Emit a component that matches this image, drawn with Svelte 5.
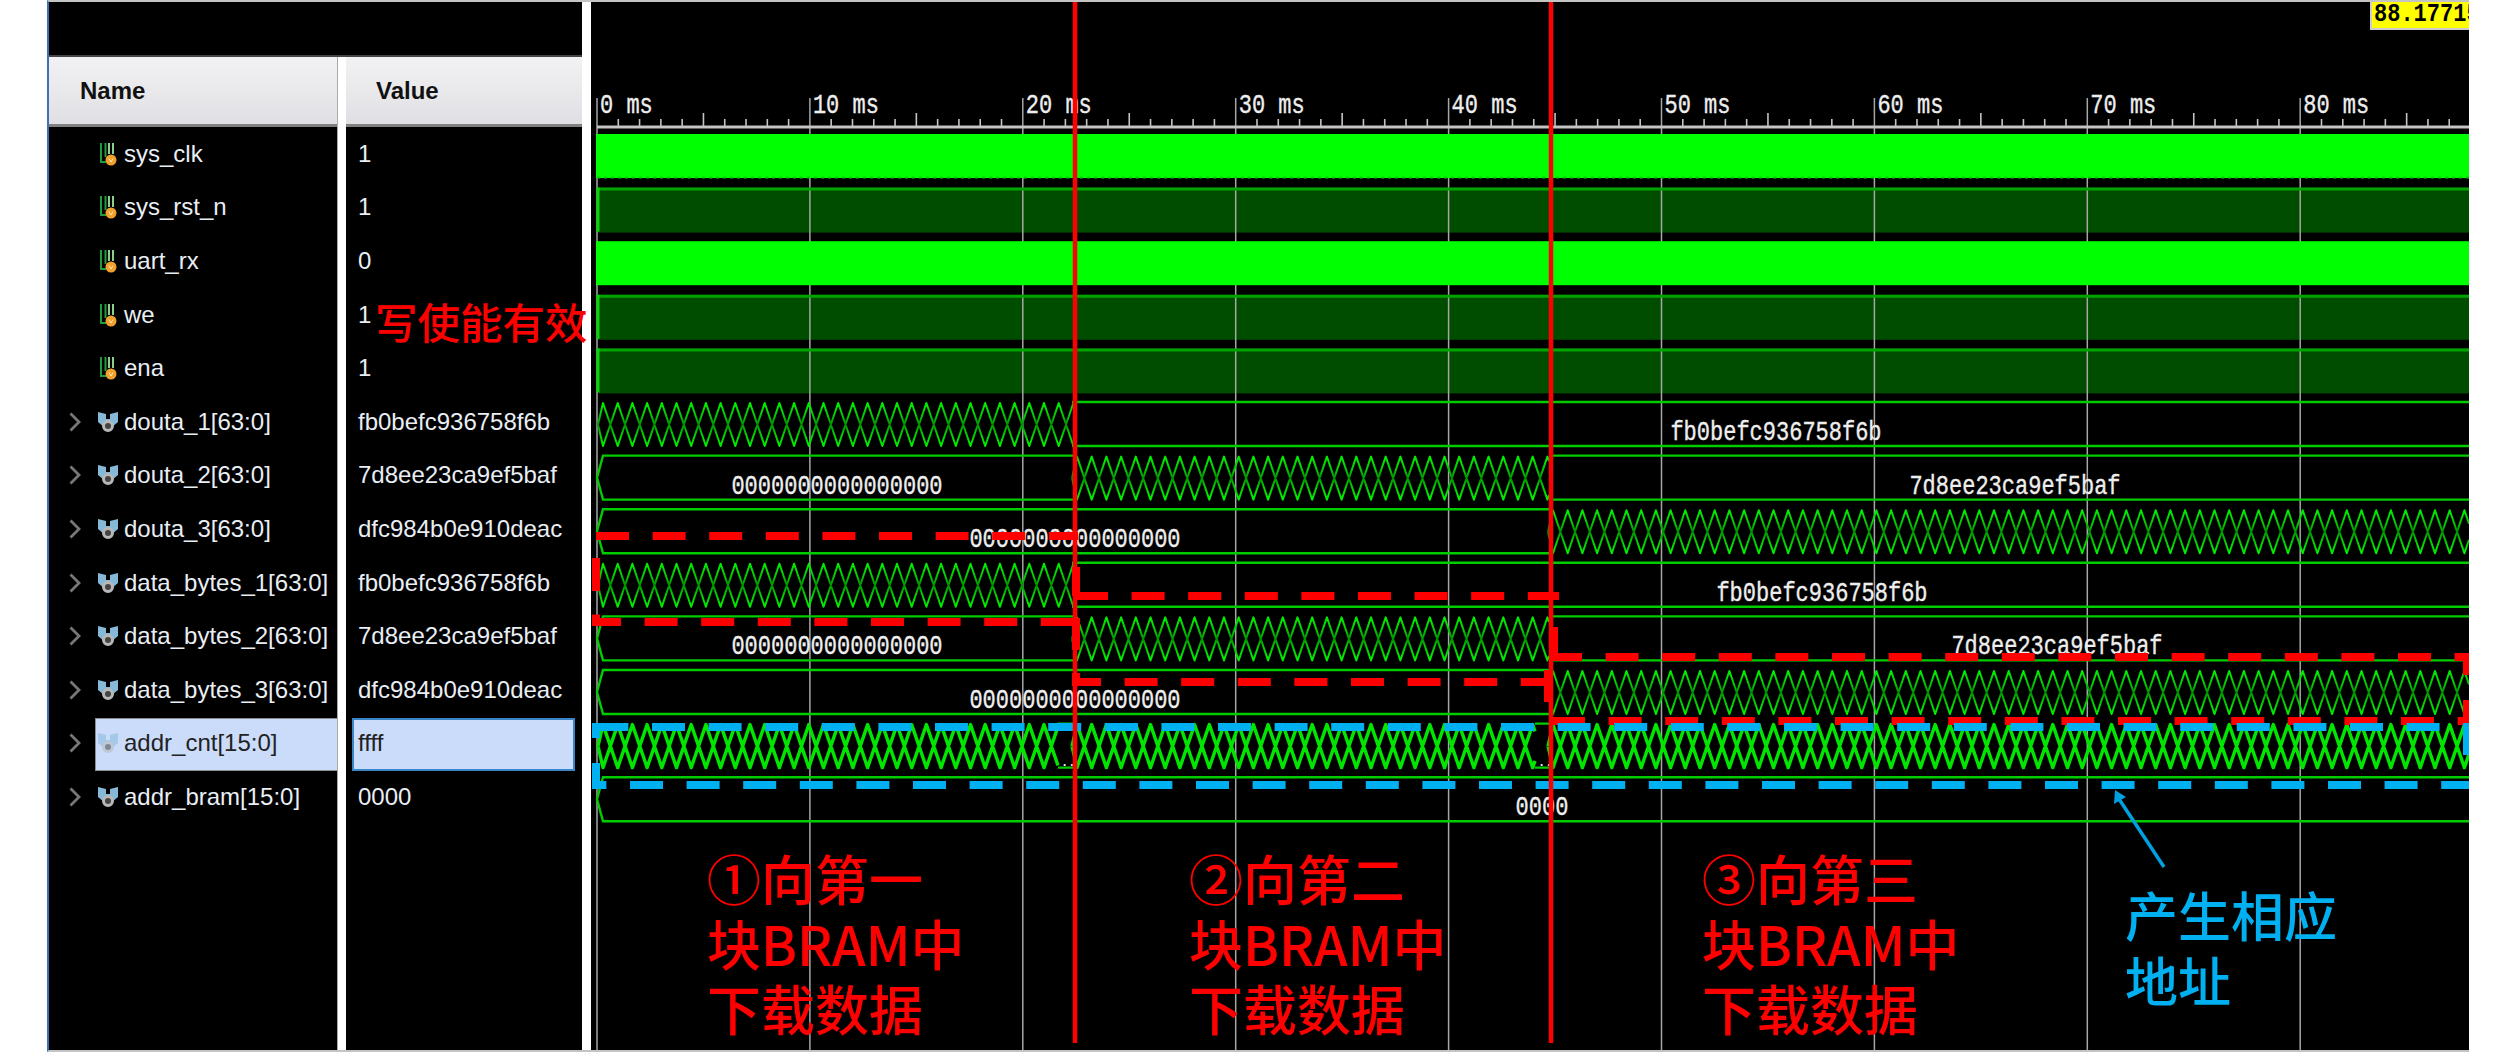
<script lang="ts">
  // Waveform viewer capture: signal list on the left, waves on a free canvas,
  // hand-drawn annotations on top. Canvas coordinates equal page coordinates.
  const ROW = 53.6;
  const TOP = 134;
  const BAND = 44;
  const T0 = 597;
  const MS10 = 212.9;
  const END = 2469;
  const C1 = 1075;
  const C2 = 1551;

  const signals = [
    { name: "sys_clk", value: "1" },
    { name: "sys_rst_n", value: "1" },
    { name: "uart_rx", value: "0" },
    { name: "we", value: "1" },
    { name: "ena", value: "1" },
    { name: "douta_1[63:0]", value: "fb0befc936758f6b", bus: true },
    { name: "douta_2[63:0]", value: "7d8ee23ca9ef5baf", bus: true },
    { name: "douta_3[63:0]", value: "dfc984b0e910deac", bus: true },
    { name: "data_bytes_1[63:0]", value: "fb0befc936758f6b", bus: true },
    { name: "data_bytes_2[63:0]", value: "7d8ee23ca9ef5baf", bus: true },
    { name: "data_bytes_3[63:0]", value: "dfc984b0e910deac", bus: true },
    { name: "addr_cnt[15:0]", value: "ffff", bus: true, selected: true },
    { name: "addr_bram[15:0]", value: "0000", bus: true },
  ];

  const rowTop = (i: number) => TOP + ROW * i;

  const majors = Array.from({ length: 9 }, (_, k) => T0 + MS10 * k);
  const ticks: { x: number; tall: boolean }[] = [];
  for (let k = 1; k * 21.29 + T0 < END; k++) {
    if (k % 10) ticks.push({ x: T0 + k * 21.29, tall: k % 5 === 0 });
  }

  // Crossing triangle waves: a bus changing value every half period. They open
  // from the row's middle and the last stroke is cut off at x2.
  function wave(x1: number, x2: number, i: number) {
    const top = rowTop(i) + 1;
    const bottom = top + BAND - 1;
    const mid = (top + bottom) / 2;
    const half = 14.7;
    const lead = 5;
    let a = `M${x1 - lead} ${mid}L${x1} ${top}`;
    let b = `M${x1 - lead} ${mid}L${x1} ${bottom}`;
    let up = true;
    let x = x1 + half;
    for (; x < x2; x += half) {
      a += `L${x.toFixed(1)} ${up ? bottom : top}`;
      b += `L${x.toFixed(1)} ${up ? top : bottom}`;
      up = !up;
    }
    const t = (x2 - (x - half)) / half;
    const span = (bottom - top) * t;
    a += `L${x2} ${up ? top + span : bottom - span}`;
    b += `L${x2} ${up ? bottom - span : top + span}`;
    return a + b;
  }

  function box(x1: number, x2: number, i: number, taper = false) {
    const top = rowTop(i);
    const bottom = top + BAND;
    if (taper) {
      return `M${x2} ${top}H${x1 + 6}L${x1} ${top + 22}L${x1 + 6} ${bottom}H${x2}`;
    }
    return `M${x1} ${top}H${x2}M${x1} ${bottom}H${x2}`;
  }

  const thinWaves = [
    wave(T0 + 6, 1074, 5),
    wave(C1 + 2, 1549, 6),
    wave(C2 + 2, END, 7),
    wave(T0 + 6, 1074, 8),
    wave(C1 + 2, 1549, 9),
    wave(C2 + 2, END, 10),
  ];
  const fatWaves = [
    wave(T0 + 6, 1058, 11),
    wave(C1 + 2, 1535, 11),
    wave(C2 + 2, END, 11),
  ];
  const boxes = [
    box(1072, END, 5),
    box(T0, 1075, 6, true),
    box(1549, END, 6),
    box(T0, 1552, 7, true),
    box(1072, END, 8),
    box(T0, 1075, 9, true),
    box(1549, END, 9),
    box(T0, 1552, 10, true),
    box(1058, 1075, 11),
    box(1535, 1552, 11),
    box(T0, END, 12, true),
  ];
  const labels = [
    { text: "fb0befc936758f6b", x: 1776, i: 5 },
    { text: "0000000000000000", x: 837, i: 6 },
    { text: "7d8ee23ca9ef5baf", x: 2015, i: 6 },
    { text: "0000000000000000", x: 1075, i: 7 },
    { text: "fb0befc936758f6b", x: 1822, i: 8 },
    { text: "0000000000000000", x: 837, i: 9 },
    { text: "7d8ee23ca9ef5baf", x: 2057, i: 9 },
    { text: "0000000000000000", x: 1075, i: 10 },
    { text: "0000", x: 1542, i: 12 },
  ];

  // Dashed annotation runs: [x1, y1, x2, y2, dash offset]
  const redDashes = [
    [596, 536, 1078, 536, 0],
    [592, 622, 1078, 622, 4],
    [596, 558, 596, 625, 0],
    [1075, 596, 1559, 596, 0],
    [1072, 682, 1548, 682, 4],
    [1076, 567, 1076, 596, 0],
    [1076, 618, 1076, 650, 0],
    [1076, 673, 1076, 685, 0],
    [1554, 627, 1554, 658, 0],
    [1549, 657, END + 2, 657, 0],
    [1548, 670, 1548, 702, 0],
    [1552, 721, END + 2, 721, 0],
    [2467, 653, 2467, 675, 0],
    [2467, 700, 2467, 723, 0],
  ];
  const blueDashes = [
    [595.4, 727, END + 2, 727, 0],
    [592, 785, END + 2, 785, 18.6],
    [596, 723, 596, 738, 0],
    [596, 763, 596, 789, 0],
    [2467, 723, 2467, 755, 0],
  ];
</script>

<div class="page">
  <div class="frame">
    <div class="panel">
      <div class="strip"></div>
      <div class="cols">
        <div class="col names">
          <div class="head">Name</div>
          {#each signals as s}
            <div class="row">
              <div class="gutter">
                {#if s.bus}
                  <svg class="chev" width="12" height="20" viewBox="0 0 12 20">
                    <path d="M1.5 1.5L10 10L1.5 18.5" />
                  </svg>
                {/if}
              </div>
              <div class="cell" class:selected={s.selected}>
                {#if s.bus}
                  <svg class="icon" width="22" height="22" viewBox="0 0 22 22" class:muted={s.selected}>
                    <path d="M1 1L9 3V8H13V3L21 1V11L15 16H7L1 11Z" fill="#86b8d8" />
                    <circle cx="11" cy="15" r="4.5" fill="#444" stroke="#b8b8b8" stroke-width="3" />
                  </svg>
                {:else}
                  <svg class="icon" width="22" height="24" viewBox="0 0 22 24">
                    <path d="M4 1V20H9M8.5 1V15" fill="none" stroke="#1f9a3c" stroke-width="2" />
                    <path d="M12 1V12M16 1V12" fill="none" stroke="#8ccf8c" stroke-width="2" />
                    <circle cx="14" cy="18" r="5.5" fill="#f0a02c" />
                    <path d="M12 16.5L14 20L16 16.5" fill="none" stroke="#ffe6b0" stroke-width="1" />
                  </svg>
                {/if}
                <span>{s.name}</span>
              </div>
            </div>
          {/each}
        </div>
        <div class="col values">
          <div class="head">Value</div>
          {#each signals as s}
            <div class="row">
              <div class="cell" class:selected={s.selected}>{s.value}</div>
            </div>
          {/each}
        </div>
      </div>
    </div>

    <svg class="canvas" width="1878" height="1048" viewBox="591 2 1878 1048">
      <defs>
        <linearGradient id="thin" x1="0" y1="0" x2="0" y2="1">
          <stop offset="0" stop-color="#00f000" />
          <stop offset="0.32" stop-color="#00c800" />
          <stop offset="0.5" stop-color="#009000" />
          <stop offset="0.68" stop-color="#00c800" />
          <stop offset="1" stop-color="#00f000" />
        </linearGradient>
      </defs>

      <!-- dark "all high" rows sit behind the grid -->
      {#each [1, 3, 4] as i}
        <rect x={T0} y={rowTop(i)} width={END - T0} height={BAND + 1} fill="#004d00" />
      {/each}

      <g class="grid">
        {#each majors as x}
          <line x1={x} y1="98" x2={x} y2="1050" />
        {/each}
      </g>

      {#each [1, 3, 4] as i}
        <path d="M{T0} {rowTop(i) + 1.5}H{END}" stroke="#00a400" stroke-width="3" fill="none" />
        <path d="M{T0 + 1} {rowTop(i)}V{rowTop(i) + BAND}" stroke="#00d800" stroke-width="3" fill="none" />
      {/each}
      {#each [0, 2] as i}
        <rect x={T0 - 1} y={rowTop(i)} width={END - T0 + 1} height={BAND} fill="#00ff00" />
      {/each}
      <line class="teeth" x1={T0} y1="177.5" x2={END} y2="177.5" />

      <g class="ruler">
        <line x1={T0} y1="127" x2={END} y2="127" />
        {#each ticks as t}
          <line x1={t.x} y1={t.tall ? 113 : 119} x2={t.x} y2="127" />
        {/each}
      </g>
      {#each majors as x, k}
        <text class="mono" transform="translate({x + 3} 113) scale(1 1.25)">{k * 10} ms</text>
      {/each}

      <path class="boxes" d={boxes.join("")} />
      {#each thinWaves as d}
        <path class="thin" d={d} />
      {/each}
      {#each fatWaves as d}
        <path class="fat" d={d} />
      {/each}

      {#each labels as l}
        <text class="mono mid" transform="translate({l.x} {rowTop(l.i) + 22 + 16}) scale(1 1.25)">{l.text}</text>
      {/each}
      <text class="dots" x="1061" y="766">..</text>
      <text class="dots" x="1538" y="766">..</text>

      {#each redDashes as [x1, y1, x2, y2, off]}
        <line class="dash red" {x1} {y1} {x2} {y2} stroke-dashoffset={off} />
      {/each}
      {#each blueDashes as [x1, y1, x2, y2, off]}
        <line class="dash blue" {x1} {y1} {x2} {y2} stroke-dashoffset={off} />
      {/each}

      <line class="cursor" x1={C1} y1="2" x2={C1} y2="1043" />
      <line class="cursor" x1={C2} y1="2" x2={C2} y2="1043" />

      <path class="arrow" d="M2164 867L2117 796" />
      <path d="M2115 790L2126 797L2114 804Z" fill="#00a0e0" />
    </svg>
  </div>

  <div class="stamp"><span>88.17715</span></div>

  <div class="note tag">写使能有效</div>
  <div class="note n1">①向第一<br />块BRAM中<br />下载数据</div>
  <div class="note n2">②向第二<br />块BRAM中<br />下载数据</div>
  <div class="note n3">③向第三<br />块BRAM中<br />下载数据</div>
  <div class="note n4">产生相应<br />地址</div>
</div>

<style>
  :global(body) {
    margin: 0;
    background: #fff;
  }
  .page {
    position: relative;
    width: 2520px;
    height: 1052px;
    overflow: hidden;
    font-family: "Liberation Sans", Arial, sans-serif;
  }
  .frame {
    display: flex;
    width: 2420px;
    height: 1048px;
    margin-left: 47px;
    background: #fff;
    border-left: 2px solid #3f6fb8;
    border-top: 2px solid #c4c4c4;
    border-bottom: 2px solid #c4c4c4;
  }
  .panel {
    display: flex;
    flex-direction: column;
    width: 533px;
    background: #000;
  }
  .strip {
    height: 53px;
    flex: none;
    background: #000;
    border-bottom: 2px solid #444;
  }
  .cols {
    display: flex;
    flex: 1;
  }
  .col {
    background: #000;
  }
  .names {
    width: 289px;
  }
  .values {
    width: 236px;
    border-left: 8px solid #fff;
    box-shadow: -1px 0 0 #aaa;
  }
  .head {
    box-sizing: border-box;
    height: 70px;
    display: flex;
    align-items: center;
    font-size: 24px;
    font-weight: 700;
    color: #111;
    background: linear-gradient(#f2f2f4, #e0e0e4);
    border-bottom: 3px solid #808080;
  }
  .names .head {
    padding-left: 31px;
  }
  .values .head {
    padding-left: 30px;
  }
  .row {
    display: flex;
    align-items: center;
    height: 53.6px;
    font-size: 24px;
    color: #e9eef4;
  }
  .gutter {
    flex: none;
    width: 46px;
    padding-left: 20px;
    box-sizing: border-box;
  }
  .chev {
    display: block;
  }
  .chev path {
    fill: none;
    stroke: #777;
    stroke-width: 2.8;
  }
  .names .cell {
    flex: 1;
    display: flex;
    align-items: center;
    box-sizing: border-box;
    height: 53px;
    margin-top: 2px;
    padding-left: 2px;
  }
  .names .cell span {
    position: relative;
    top: -1px;
    margin-left: 5px;
    white-space: nowrap;
  }
  .icon {
    flex: none;
    margin-top: -2px;
  }
  .muted {
    opacity: 0.55;
  }
  .values .cell {
    box-sizing: border-box;
    flex: 1;
    display: flex;
    align-items: center;
    height: 53px;
    margin: 2px 7px 0 6px;
    padding: 0 0 2px 6px;
    white-space: nowrap;
  }
  .names .cell.selected {
    background: #cbdcfb;
    color: #222;
    border: 1px solid #8c8c8c;
    border-right: none;
    padding-left: 1px;
  }
  .values .cell.selected {
    background: #cbdcfb;
    color: #222;
    border: 2px solid #3a85c8;
    padding-left: 4px;
  }
  .canvas {
    display: block;
    flex: none;
    margin-left: 9px;
    background: #000;
  }
  .grid line {
    stroke: #a6a6a6;
    stroke-width: 1.5;
  }
  .ruler line {
    stroke: #c4c4c4;
    stroke-width: 1.6;
  }
  .ruler line:first-child {
    stroke-width: 3;
  }
  .teeth {
    stroke: #00d000;
    stroke-width: 2;
    stroke-dasharray: 3 4;
  }
  .mono {
    font-family: "Liberation Mono", monospace;
    font-size: 22px;
    fill: #eee;
    stroke: #eee;
    stroke-width: 0.3;
  }
  .mid {
    text-anchor: middle;
  }
  .dots {
    font-family: "Liberation Mono", monospace;
    font-size: 12px;
    font-weight: 700;
    fill: #eee;
  }
  .boxes {
    fill: none;
    stroke: #00cc00;
    stroke-width: 2.4;
  }
  .thin {
    fill: none;
    stroke: url(#thin);
    stroke-width: 2;
    stroke-linejoin: round;
  }
  .fat {
    fill: none;
    stroke: #00e600;
    stroke-width: 3.4;
    stroke-linejoin: round;
  }
  .dash {
    stroke-width: 8;
    stroke-dasharray: 33 23.6;
  }
  .red {
    stroke: #ff0000;
  }
  .blue {
    stroke: #00b0f0;
  }
  .cursor {
    stroke: #ff0000;
    stroke-width: 4.5;
  }
  .arrow {
    fill: none;
    stroke: #00a0e0;
    stroke-width: 3.5;
  }
  .stamp {
    position: absolute;
    left: 2370px;
    top: 2px;
    box-sizing: border-box;
    width: 99px;
    height: 28px;
    overflow: hidden;
    padding-left: 2px;
    line-height: 25px;
    font-family: "Liberation Mono", monospace;
    font-size: 22px;
    font-weight: 700;
    color: #000;
    background: #ffff00;
    border-left: 2px solid #ccc;
    border-bottom: 2px solid #ccc;
    white-space: nowrap;
  }
  .stamp span {
    display: inline-block;
    transform: scaleY(1.2);
  }
  .note {
    position: absolute;
    font-family: "Noto Sans CJK SC", sans-serif;
    font-weight: 500;
    font-size: 54px;
    line-height: 65px;
    color: #ff0000;
    white-space: nowrap;
  }
  .n1,
  .n2,
  .n3 {
    top: 845px;
  }
  .n1 {
    left: 707px;
  }
  .n2 {
    left: 1189px;
  }
  .n3 {
    left: 1702px;
  }
  .n4 {
    left: 2125px;
    top: 882px;
    font-size: 53px;
    color: #00b0f0;
  }
  .tag {
    left: 375px;
    top: 288px;
    font-size: 42.5px;
  }
</style>
